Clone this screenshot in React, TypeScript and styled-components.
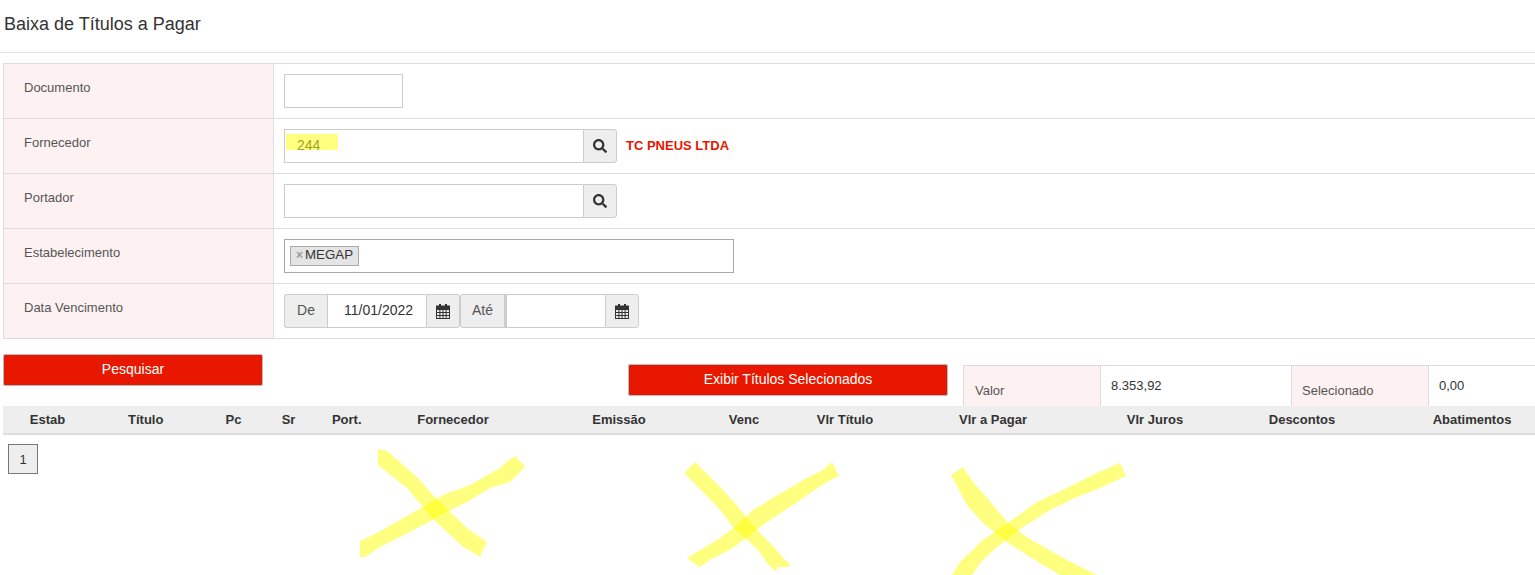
import React from "react";
import styled, { createGlobalStyle } from "styled-components";
import { FaSearch } from "react-icons/fa";

const GlobalStyle = createGlobalStyle`
  html, body {
    margin: 0;
    padding: 0;
    background: #fff;
    overflow: hidden;
  }
  body {
    font-family: "Liberation Sans", Arial, sans-serif;
    color: #333;
  }
  * {
    box-sizing: border-box;
  }
`;

const Page = styled.div`
  position: relative;
  width: 1535px;
  height: 575px;
  overflow: hidden;
`;

const Title = styled.h1`
  margin: 0;
  height: 53px;
  padding: 15px 0 0 4px;
  border-bottom: 1px solid #e5e5e5;
  font-size: 18px;
  line-height: 19px;
  font-weight: 400;
  color: #333;
`;

const FilterTable = styled.div`
  margin: 10px 0 0 3px;
  border-top: 1px solid #ddd;
`;

const FilterRow = styled.div`
  display: flex;
  height: 55px;
  border-bottom: 1px solid #ddd;
`;

const FilterLabel = styled.div`
  flex: none;
  width: 271px;
  padding: 16px 0 0 20px;
  background: #fdf2f1;
  border-left: 1px solid #ddd;
  border-right: 1px solid #ddd;
  font-size: 13px;
  line-height: 15px;
  color: #555;
`;

const FilterField = styled.div`
  display: flex;
  align-items: flex-start;
  padding: 10px 0 0 10px;
`;

const TextInput = styled.div<{ $width: number }>`
  width: ${({ $width }) => $width}px;
  height: 34px;
  background: #fff;
  border: 1px solid #ccc;
  font-size: 13px;
`;

const LookupInput = styled(TextInput)`
  padding: 4px 0 0 1px;
  border-right: 0;
`;

const Marked = styled.span`
  display: block;
  width: 52px;
  height: 16px;
  padding: 3px 0 0 11px;
  background: #ffff80;
  font-size: 14px;
  line-height: 16px;
  color: #a3a32a;
`;

const AddonButton = styled.div<{ $width?: number }>`
  display: flex;
  flex: none;
  align-items: center;
  justify-content: center;
  width: ${({ $width }) => $width ?? 34}px;
  height: 34px;
  background: #eee;
  border: 1px solid #ccc;
  border-radius: 0 3px 3px 0;
  color: #333;
`;

const AddonLabel = styled(AddonButton)<{ $divider?: boolean }>`
  padding-bottom: 2px;
  border-radius: 3px 0 0 3px;
  border-right: ${({ $divider }) => ($divider ? "2px solid #ccc" : "0")};
  font-size: 14px;
  color: #555;
`;

const SupplierName = styled.span`
  align-self: center;
  margin: 0 0 12px 9px;
  font-size: 13px;
  font-weight: 700;
  color: #e81600;
`;

const TagBox = styled.div`
  width: 450px;
  height: 34px;
  padding: 5px;
  border: 1px solid #aaa;
`;

const Tag = styled.span`
  display: inline-flex;
  align-items: center;
  height: 20px;
  padding: 0 5px 3px;
  background: #e4e4e4;
  border: 1px solid #aaa;
  font-size: 13.3px;
  color: #333;
`;

const TagRemove = styled.b`
  margin: 2px 2px 0 0;
  font-size: 12px;
  color: #999;
`;

const DateInput = styled.div<{ $width: number }>`
  width: ${({ $width }) => $width}px;
  height: 34px;
  padding-left: 16px;
  background: #fff;
  border-top: 1px solid #ccc;
  border-bottom: 1px solid #ccc;
  border-left: 1px solid #ccc;
  font-size: 14px;
  line-height: 30px;
  color: #333;
`;

const Toolbar = styled.div`
  display: flex;
  align-items: flex-start;
  height: 67px;
  padding: 15px 0 0 3px;
`;

const ActionButton = styled.div<{ $width: number; $top?: number; $left?: number }>`
  display: flex;
  flex: none;
  align-items: center;
  justify-content: center;
  width: ${({ $width }) => $width}px;
  height: 32px;
  margin: ${({ $top }) => $top ?? 0}px 0 0 ${({ $left }) => $left ?? 0}px;
  padding-bottom: 2px;
  background: #e81700;
  border: 1px solid #bbb;
  border-radius: 2px;
  font-size: 14px;
  color: #fff;
`;

const Totals = styled.div`
  display: flex;
  flex: none;
  width: 580px;
  height: 41px;
  margin: 11px 0 0 15px;
  border-top: 1px solid #ddd;
  border-left: 1px solid #ddd;
`;

const TotalLabel = styled.div<{ $width: number; $indent: number }>`
  flex: none;
  width: ${({ $width }) => $width}px;
  padding: 17px 0 0 ${({ $indent }) => $indent}px;
  background: #fdf2f1;
  border-right: 1px solid #ddd;
  font-size: 13px;
  line-height: 15px;
  color: #555;
`;

const TotalValue = styled.div<{ $width: number }>`
  flex: none;
  width: ${({ $width }) => $width}px;
  padding: 12px 0 0 10px;
  border-right: 1px solid #ddd;
  font-size: 13px;
  line-height: 15px;
  color: #333;
`;

const GridHeader = styled.div`
  display: grid;
  grid-template-columns: 89px 107.5px 68px 42px 74.5px 138px 194px 56px 146px 150px 174px 120px 220px;
  width: 1579px;
  height: 29px;
  margin-left: 3px;
  background: #eee;
  border-bottom: 2px solid #ddd;
`;

const HeaderCell = styled.div`
  font-size: 13px;
  font-weight: 700;
  line-height: 27px;
  text-align: center;
  color: #333;
`;

const Pager = styled.div`
  padding: 9px 0 0 8px;
`;

const PageButton = styled.div`
  display: flex;
  align-items: center;
  justify-content: center;
  width: 30px;
  height: 30px;
  background: #eee;
  border: 1px solid #777;
  font-size: 13px;
  color: #333;
`;

const Scribbles = styled.svg`
  position: absolute;
  top: 0;
  left: 0;
  pointer-events: none;
`;

const CalendarIcon = () => (
  <svg width="14" height="15" viewBox="0 0 14 15" fill="#333">
    <rect x="3" y="0" width="2" height="3" />
    <rect x="9" y="0" width="2" height="3" />
    <rect x="0" y="1.5" width="14" height="3.5" />
    <path
      fillRule="evenodd"
      d="M0 5h14v10H0zM1 6v2h2.4V6zm3.4 0v2h2.1V6zm3.1 0v2h2.1V6zm3.1 0v2H13V6zM1 9v2h2.4V9zm3.4 0v2h2.1V9zm3.1 0v2h2.1V9zm3.1 0v2H13V9zM1 12v2h2.4v-2zm3.4 0v2h2.1v-2zm3.1 0v2h2.1v-2zm3.1 0v2H13v-2z"
    />
  </svg>
);

const COLUMNS = [
  "Estab",
  "Título",
  "Pc",
  "Sr",
  "Port.",
  "Fornecedor",
  "Emissão",
  "Venc",
  "Vlr Título",
  "Vlr a Pagar",
  "Vlr Juros",
  "Descontos",
  "Abatimentos",
];

// highlighter strokes painted over the page, traced by hand
const MARKS = [
  "378,449 387,451 400,462 418,478 433,495 448,510 467,528 487,542 480,557 462,546 447,532 433,519 423,507 407,488 388,473 378,465",
  "360,541 377,533 400,520 423,507 443,495 470,485 500,468 506,462 515,456 525,466 520,472 510,482 490,488 467,502 447,512 427,523 400,537 380,547 365,557 360,557",
  "695,462 703,470 720,487 735,503 747,518 760,533 775,548 783,558 789,563 789,567 777,567 776,572 767,563 758,550 745,538 733,527 720,510 703,492 684,473",
  "832,462 839,476 827,482 810,493 793,505 767,522 750,535 730,550 713,558 700,567 687,558 697,552 717,540 735,527 753,510 783,492 807,478 823,470",
  "951,475 963,467 973,482 987,498 1008,523 1028,538 1067,560 1097,575 1060,575 1030,557 1008,543 983,523 967,505",
  "1120,463 1126,476 1100,488 1077,497 1050,510 1023,527 997,547 980,563 972,575 952,575 960,562 983,540 1008,523 1037,502 1063,490 1097,473",
];

const App = () => (
  <Page>
    <GlobalStyle />
    <Title>Baixa de Títulos a Pagar</Title>
    <FilterTable>
      <FilterRow>
        <FilterLabel>Documento</FilterLabel>
        <FilterField>
          <TextInput $width={119} />
        </FilterField>
      </FilterRow>
      <FilterRow>
        <FilterLabel>Fornecedor</FilterLabel>
        <FilterField>
          <LookupInput $width={299}>
            <Marked>244</Marked>
          </LookupInput>
          <AddonButton>
            <FaSearch size={14} />
          </AddonButton>
          <SupplierName>TC PNEUS LTDA</SupplierName>
        </FilterField>
      </FilterRow>
      <FilterRow>
        <FilterLabel>Portador</FilterLabel>
        <FilterField>
          <LookupInput $width={299} />
          <AddonButton>
            <FaSearch size={14} />
          </AddonButton>
        </FilterField>
      </FilterRow>
      <FilterRow>
        <FilterLabel>Estabelecimento</FilterLabel>
        <FilterField>
          <TagBox>
            <Tag>
              <TagRemove>×</TagRemove>MEGAP
            </Tag>
          </TagBox>
        </FilterField>
      </FilterRow>
      <FilterRow>
        <FilterLabel>Data Vencimento</FilterLabel>
        <FilterField>
          <AddonLabel $width={43}>De</AddonLabel>
          <DateInput $width={99}>11/01/2022</DateInput>
          <AddonButton>
            <CalendarIcon />
          </AddonButton>
          <AddonLabel $width={46} $divider>
            Até
          </AddonLabel>
          <DateInput $width={99} />
          <AddonButton>
            <CalendarIcon />
          </AddonButton>
        </FilterField>
      </FilterRow>
    </FilterTable>
    <Toolbar>
      <ActionButton $width={260}>Pesquisar</ActionButton>
      <ActionButton $width={320} $top={10} $left={365}>
        Exibir Títulos Selecionados
      </ActionButton>
      <Totals>
        <TotalLabel $width={137} $indent={11}>
          Valor
        </TotalLabel>
        <TotalValue $width={191}>8.353,92</TotalValue>
        <TotalLabel $width={137} $indent={10}>
          Selecionado
        </TotalLabel>
        <TotalValue $width={115}>0,00</TotalValue>
      </Totals>
    </Toolbar>
    <GridHeader>
      {COLUMNS.map((name) => (
        <HeaderCell key={name}>{name}</HeaderCell>
      ))}
    </GridHeader>
    <Pager>
      <PageButton>1</PageButton>
    </Pager>
    <Scribbles width="1535" height="575">
      {MARKS.map((points) => (
        <polygon key={points} points={points} fill="#ffff00" fillOpacity="0.5" />
      ))}
    </Scribbles>
  </Page>
);

export default App;
